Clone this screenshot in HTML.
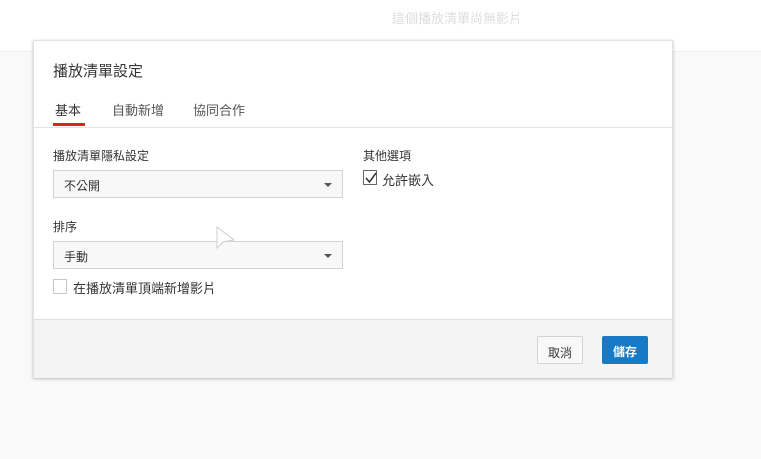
<!DOCTYPE html>
<html><head><meta charset="utf-8"><style>
*{margin:0;padding:0;box-sizing:border-box}
body{width:761px;height:459px;background:#f9f9f9;font-family:"Liberation Sans","Noto Sans CJK TC",sans-serif;position:relative;overflow:hidden;font-size:12px;color:#333}
.top{position:absolute;left:0;top:0;width:761px;height:52px;background:#fff;border-bottom:1px solid #eee}
.toptxt{position:absolute;left:392px;top:8px;color:#ddd;font-size:13px}
.dlg{position:absolute;left:33px;top:40px;width:640px;height:338px;background:#fff;box-shadow:0 1px 3px rgba(0,0,0,.25);border:1px solid #e2e2e2}
.abs{position:absolute}
.title{left:19px;top:19px;font-size:15px;color:#333}
.tab{top:59px;font-size:13px;color:#555}
.ul{left:19px;top:82px;width:32px;height:3px;background:#e62117}
.hr{left:0;top:86px;width:638px;height:1px;background:#e2e2e2}
.lbl{font-size:12px;color:#333}
.sel{width:290px;height:28px;border:1px solid #d3d3d3;background:#f8f8f8;font-size:12px;padding:6px 10px;color:#333}
.arr{position:absolute;right:10px;top:12px;border-left:4px solid transparent;border-right:4px solid transparent;border-top:4px solid #555}
.cb{width:14px;height:15px;border:1px solid #c6c6c6;background:#fff}
.foot{left:0;top:278px;width:638px;height:59px;background:#f4f4f4;border-top:1px solid #e0e0e0}
.btn{height:28px;font-size:12px;padding:7px 0;border-radius:2px;text-align:center}
</style></head><body>
<div class="top"><div class="toptxt">這個播放清單尚無影片</div></div>
<div class="dlg">
<div class="abs title">播放清單設定</div>
<div class="abs tab" style="left:21px;color:#333">基本</div>
<div class="abs tab" style="left:78px">自動新增</div>
<div class="abs tab" style="left:159px">協同合作</div>
<div class="abs ul"></div>
<div class="abs hr"></div>
<div class="abs lbl" style="left:19px;top:106px">播放清單隱私設定</div>
<div class="abs sel" style="left:19px;top:129px">不公開<div class="arr"></div></div>
<div class="abs lbl" style="left:19px;top:177px">排序</div>
<div class="abs sel" style="left:19px;top:200px">手動<div class="arr"></div></div>
<div class="abs cb" style="left:19px;top:238px"></div>
<div class="abs lbl" style="left:39px;top:237px;font-size:13px">在播放清單頂端新增影片</div>
<div class="abs lbl" style="left:329px;top:106px">其他選項</div>
<div class="abs cb" style="left:329px;top:129px;border-color:#666">
<svg width="14" height="14" style="position:absolute;left:0;top:0"><path d="M2 7 L5.5 11 L12 2" stroke="#333" stroke-width="1.5" fill="none"/></svg></div>
<div class="abs lbl" style="left:348px;top:129px;font-size:13px">允許嵌入</div>
<div class="abs foot">
<div class="abs btn" style="left:503px;top:16px;width:46px;border:1px solid #d3d3d3;background:#f8f8f8;color:#333">取消</div>
<div class="abs btn" style="left:568px;top:16px;width:46px;background:#167ac6;color:#fff;font-weight:bold">儲存</div>
</div>
</div>
<svg class="abs" style="left:216px;top:226px" width="22" height="26"><path d="M1 1 L1 22 L7 16 L18 14 Z" fill="#fff" stroke="#ccc"/></svg>
</body></html>
